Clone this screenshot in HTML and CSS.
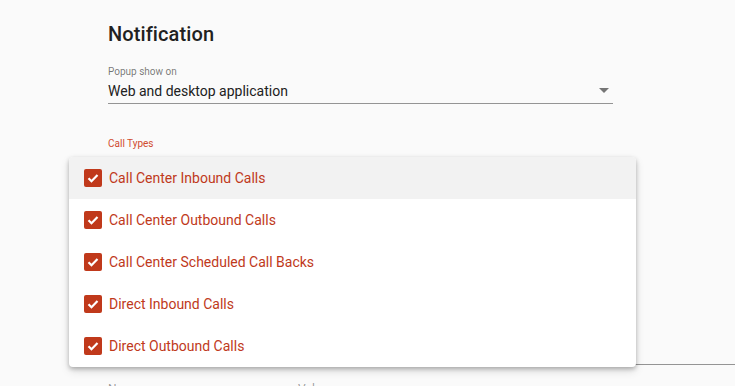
FILE: index.html
```html
<!DOCTYPE html>
<html>
  <head>
    <meta charset="UTF-8" />
    <title>Notification</title>
    <link rel="stylesheet" href="styles.css">
  </head>
  <body>
    <div class="page">
      <h2>Notification</h2>

      <div class="field">
        <label class="field-label">Popup show on</label>
        <div class="select">
          <span>Web and desktop application</span>
          <span class="arrow"></span>
        </div>
      </div>

      <div class="field call-types">
        <label class="field-label active">Call Types</label>
        <div class="select wide"></div>
      </div>

      <div class="below">
        <span class="below-name">Name</span>
        <span>Value</span>
      </div>
    </div>

    <ul class="menu">
      <li class="menu-item focused">
        <span class="checkbox"><svg viewBox="0 0 18 18"><path d="M4.5 9.2l3 3 6-6.2" /></svg></span>
        Call Center Inbound Calls
      </li>
      <li class="menu-item">
        <span class="checkbox"><svg viewBox="0 0 18 18"><path d="M4.5 9.2l3 3 6-6.2" /></svg></span>
        Call Center Outbound Calls
      </li>
      <li class="menu-item">
        <span class="checkbox"><svg viewBox="0 0 18 18"><path d="M4.5 9.2l3 3 6-6.2" /></svg></span>
        Call Center Scheduled Call Backs
      </li>
      <li class="menu-item">
        <span class="checkbox"><svg viewBox="0 0 18 18"><path d="M4.5 9.2l3 3 6-6.2" /></svg></span>
        Direct Inbound Calls
      </li>
      <li class="menu-item">
        <span class="checkbox"><svg viewBox="0 0 18 18"><path d="M4.5 9.2l3 3 6-6.2" /></svg></span>
        Direct Outbound Calls
      </li>
    </ul>
  </body>
</html>
```

FILE: styles.css
```css
body {
  margin: 0;
  background: #fafafa;
  font-family: Roboto, "Noto Sans", Arial, sans-serif;
  color: #212121;
  overflow: hidden;
  height: 386px;
}

.page {
  padding: 20px 0 0 108px;
}

h2 {
  font-size: 20px;
  font-weight: 500;
  margin: 0 0 18px;
  line-height: 28px;
  color: #212121;
  letter-spacing: 0.1px;
}

.field {
  width: 505px;
}

.field-label {
  display: block;
  font-size: 10px;
  line-height: 12px;
  color: rgba(0, 0, 0, 0.54);
  margin-bottom: 3px;
}

.field-label.active {
  color: #d14b2e;
}

.select {
  display: flex;
  align-items: center;
  justify-content: space-between;
  box-sizing: border-box;
  height: 23px;
  padding-bottom: 3px;
  font-size: 14px;
  border-bottom: 1px solid #949494;
  color: #212121;
}

.arrow {
  width: 0;
  height: 0;
  border-left: 5px solid transparent;
  border-right: 5px solid transparent;
  border-top: 5px solid #757575;
  margin-right: 4px;
}

.call-types {
  margin-top: 34px;
  width: 627px;
}

.select.wide {
  height: 212px;
}

.below {
  display: flex;
  gap: 150px;
  margin-top: 17px;
  font-size: 12px;
  color: rgba(0, 0, 0, 0.4);
}

.below-name {
  width: 40px;
}

.menu {
  position: absolute;
  top: 157px;
  left: 69px;
  width: 567px;
  margin: 0;
  padding: 0;
  list-style: none;
  background: #fff;
  border-radius: 4px;
  overflow: hidden;
  box-shadow: 0 2px 4px rgba(0, 0, 0, 0.25), 0 4px 10px rgba(0, 0, 0, 0.12);
}

.menu-item {
  display: flex;
  align-items: center;
  height: 42px;
  padding-left: 15px;
  font-size: 14px;
  color: #c0391b;
}

.menu-item.focused {
  background: #f2f2f2;
}

.checkbox {
  width: 18px;
  height: 18px;
  border-radius: 2px;
  background: #c0391b;
  margin-right: 7px;
  display: flex;
}

.checkbox svg {
  width: 18px;
  height: 18px;
  fill: none;
  stroke: #fff;
  stroke-width: 2.2;
}
```
